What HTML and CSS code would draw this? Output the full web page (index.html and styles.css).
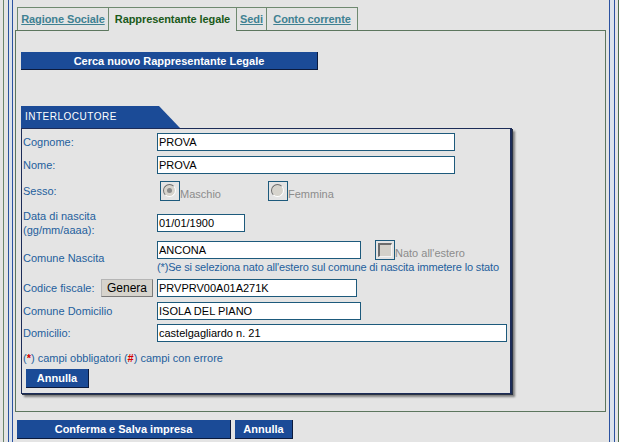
FILE: index.html
```html
<!DOCTYPE html>
<html lang="it">
<head>
    <meta charset="UTF-8">
    <meta name="viewport" content="width=device-width, initial-scale=1.0">
    <title>Rappresentante legale</title>
    <link rel="stylesheet" href="styles.css">
</head>
<body>
    <div class="frame">
        <div class="rail">
            <div class="outer">
                <div class="main">
                    <div class="tabs">
                        <a class="tab tab-ragione" href="#">Ragione Sociale</a>
                        <span class="tab tab-rapp active">Rappresentante legale</span>
                        <a class="tab tab-sedi" href="#">Sedi</a>
                        <a class="tab tab-conto" href="#">Conto corrente</a>
                    </div>

                    <div class="panel">
                        <button class="btn btn-search">Cerca nuovo Rappresentante Legale</button>

                        <div class="section-title">INTERLOCUTORE</div>
                        <div class="section">
                            <div class="row row-cognome">
                                <label class="label">Cognome:</label>
                                <input class="field w-long" type="text" value="PROVA">
                            </div>
                            <div class="row row-nome">
                                <label class="label">Nome:</label>
                                <input class="field w-long" type="text" value="PROVA">
                            </div>
                            <div class="row row-sesso">
                                <label class="label">Sesso:</label>
                                <div class="choice choice-m">
                                    <span class="choice-box"><span class="radio checked"></span></span>
                                    <span class="choice-text">Maschio</span>
                                </div>
                                <div class="choice">
                                    <span class="choice-box"><span class="radio"></span></span>
                                    <span class="choice-text">Femmina</span>
                                </div>
                            </div>
                            <div class="row row-data">
                                <label class="label">Data di nascita<br>(gg/mm/aaaa):</label>
                                <input class="field w-date" type="text" value="01/01/1900">
                            </div>
                            <div class="row row-comune">
                                <label class="label">Comune Nascita</label>
                                <div class="field-stack">
                                    <div class="field-line">
                                        <input class="field w-mid" type="text" value="ANCONA">
                                        <div class="choice choice-estero">
                                            <span class="choice-box"><span class="check"></span></span>
                                            <span class="choice-text">Nato all'estero</span>
                                        </div>
                                    </div>
                                    <div class="hint">(*)Se si seleziona nato all'estero sul comune di nascita immetere lo stato</div>
                                </div>
                            </div>
                            <div class="row row-cf">
                                <label class="label label-cf">Codice fiscale: <button class="btn-genera">Genera</button></label>
                                <input class="field w-cf" type="text" value="PRVPRV00A01A271K">
                            </div>
                            <div class="row row-domcom">
                                <label class="label">Comune Domicilio</label>
                                <input class="field w-mid" type="text" value="ISOLA DEL PIANO">
                            </div>
                            <div class="row row-dom">
                                <label class="label">Domicilio:</label>
                                <input class="field w-addr" type="text" value="castelgagliardo n. 21">
                            </div>
                            <div class="legend">(<span class="req">*</span>) campi obbligatori (<span class="req">#</span>) campi con errore</div>
                            <button class="btn btn-annulla-small">Annulla</button>
                        </div>
                    </div>

                    <div class="actions">
                        <button class="btn btn-confirm">Conferma e Salva impresa</button>
                        <button class="btn btn-cancel">Annulla</button>
                    </div>
                </div>
            </div>
        </div>
    </div>
</body>
</html>
```

FILE: styles.css
```css
* {
    margin: 0;
    padding: 0;
    box-sizing: border-box;
}

body {
    background-color: #ffffff;
    font-family: "Liberation Sans", Arial, sans-serif;
    font-size: 11px;
    height: 442px;
    overflow: hidden;
}

/* outer frame lines */
.frame {
    width: 619px;
    height: 442px;
    background: #e4e4e4;
    padding-left: 3px;
}

.rail {
    height: 100%;
    border-left: 1px solid #6a846a;
    border-right: 1px solid #4d6d4d;
    padding: 0 3px 0 4px;
}

.outer {
    height: 100%;
    border-left: 1px solid #2b52a0;
    border-right: 1px solid #2b52a0;
    background: #dbe3ec;
    padding: 0 4px 0 3px;
}

.main {
    height: 100%;
    border-left: 1px solid #2b52a0;
    border-right: 1px solid #2b52a0;
    background: #e4e4e4;
    padding: 0 3px 0 2px;
    display: flex;
    flex-direction: column;
}

/* tabs */
.tabs {
    display: flex;
    padding: 7px 0 0 2px;
}

.tab {
    display: block;
    height: 23px;
    border-top: 1px solid #6f8a70;
    border-left: 1px solid #6f8a70;
    font-weight: bold;
    font-size: 11px;
    line-height: 22px;
    text-align: center;
    color: #3f8192;
    text-decoration: underline;
    letter-spacing: -0.1px;
}

.tab-ragione { width: 91px; }
.tab-rapp { width: 128px; }
.tab-sedi { width: 30px; }
.tab-conto { width: 92px; border-right: 1px solid #6f8a70; }

.tab.active {
    color: #1a5a1a;
    text-decoration: none;
    height: 24px;
    margin-bottom: -1px;
    background: #e4e4e4;
    position: relative;
}

/* panel */
.panel {
    border: 1px solid #5c765e;
    padding: 21px 0 17px 5px;
}

.btn {
    background: #1b4b97;
    color: white;
    border: none;
    border-right: 1px solid #0b1a3c;
    border-bottom: 1px solid #0b1a3c;
    font-family: "Liberation Sans", Arial, sans-serif;
    font-weight: bold;
    font-size: 11px;
    height: 19px;
    cursor: pointer;
}

.btn-search {
    display: block;
    width: 297px;
    height: 18px;
}

.section-title {
    margin-top: 36px;
    width: 159px;
    height: 22px;
    background: #1b4b97;
    color: white;
    font-size: 10px;
    letter-spacing: 0.5px;
    line-height: 22px;
    padding-left: 4px;
    clip-path: polygon(0 0, 138px 0, 100% 100%, 0 100%);
}

.section {
    width: 491px;
    border: 1px solid #1c2c58;
    border-right: 2px solid #1c2c58;
    padding: 4px 0 5px 1px;
    box-shadow: 1px 1px 0 #2a3344, 3px 3px 2px rgba(0, 0, 0, 0.45);
}

/* form rows */
.row {
    display: flex;
    align-items: center;
    margin-top: 5px;
}

.row-cognome { margin-top: 0; }
.row-sesso { margin-top: 7px; height: 20px; }
.row-data { margin-top: 8px; height: 28px; }
.row-comune { margin-top: 3px; }
.row-cf { margin-top: 4px; }
.row-dom { margin-top: 4px; }

.label {
    width: 134px;
    flex-shrink: 0;
    color: #1f5f9d;
    font-size: 11px;
    line-height: 14px;
}

.label-cf {
    display: flex;
    align-items: center;
    justify-content: space-between;
    padding-right: 4px;
}

.field {
    height: 18px;
    border: 1px solid #1d5a7c;
    background: white;
    font-family: "Liberation Sans", Arial, sans-serif;
    font-size: 11px;
    color: black;
    padding: 0 1px;
}

.w-long { width: 298px; }
.w-date { width: 88px; }
.w-mid { width: 204px; }
.w-cf { width: 200px; }
.w-addr { width: 350px; }

.field-line {
    display: flex;
    align-items: center;
}

.hint {
    color: #1f5f9d;
    font-size: 11px;
    line-height: 15px;
    white-space: nowrap;
    letter-spacing: -0.15px;
}

/* radio and checkbox */
.choice {
    display: flex;
    align-items: flex-end;
}

.choice-m {
    margin-left: 3px;
    width: 108px;
}

.choice-box {
    width: 20px;
    height: 20px;
    border: 1px solid #1d5a7c;
    padding: 2px 0 0 2px;
    display: block;
}

.choice-text {
    color: #8c8c8c;
    font-size: 11px;
    line-height: 14px;
}

.radio {
    display: block;
    width: 13px;
    height: 13px;
    border-radius: 50%;
    border: 1px solid;
    border-color: #6d6d6d #ffffff #ffffff #6d6d6d;
    background: #d7d4cd;
    position: relative;
}

.radio.checked::after {
    content: "";
    position: absolute;
    left: 3px;
    top: 3px;
    width: 5px;
    height: 5px;
    border-radius: 50%;
    background: #8a8a8a;
}

.choice-estero {
    margin-left: 14px;
}

.check {
    display: block;
    width: 14px;
    height: 14px;
    border-top: 2px solid #6d6d6d;
    border-left: 2px solid #6d6d6d;
    border-right: 1px solid #f4f4f4;
    border-bottom: 1px solid #f4f4f4;
    background: #d4d1ca;
}

.btn-genera {
    width: 52px;
    height: 18px;
    background: #d6d3cc;
    border: 1px solid;
    border-color: #b5b5b5 #7a7a7a #7a7a7a #b5b5b5;
    font-family: "Liberation Sans", Arial, sans-serif;
    font-size: 12px;
    color: black;
}

.legend {
    margin-top: 9px;
    color: #1f5f9d;
    font-size: 11px;
    line-height: 14px;
}

.req {
    color: #d40000;
    font-weight: bold;
}

.btn-annulla-small {
    display: block;
    margin: 4px 0 0 3px;
    width: 63px;
}

/* bottom actions */
.actions {
    display: flex;
    gap: 4px;
    padding: 8px 0 0 2px;
}

.btn-confirm { width: 214px; }
.btn-cancel { width: 58px; }
```
